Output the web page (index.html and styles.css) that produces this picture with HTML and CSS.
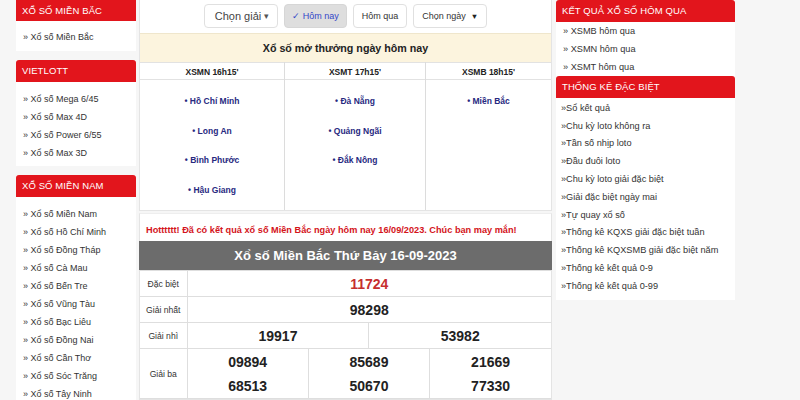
FILE: index.html
```html
<!DOCTYPE html>
<html lang="vi">
<head>
<meta charset="utf-8">
<title>Xổ số</title>
<link rel="stylesheet" href="styles.css">
</head>
<body>
<div class="page">
  <aside class="left">
    <section class="box box-first">
      <h3 class="box-title">XỔ SỐ MIỀN BẮC</h3>
      <ul class="links links-a">
        <li>» Xổ số Miền Bắc</li>
      </ul>
    </section>
    <section class="box">
      <h3 class="box-title">VIETLOTT</h3>
      <ul class="links links-b">
        <li>» Xổ số Mega 6/45</li>
        <li>» Xổ số Max 4D</li>
        <li>» Xổ số Power 6/55</li>
        <li>» Xổ số Max 3D</li>
      </ul>
    </section>
    <section class="box">
      <h3 class="box-title">XỔ SỐ MIỀN NAM</h3>
      <ul class="links links-c">
        <li>» Xổ số Miền Nam</li>
        <li>» Xổ số Hồ Chí Minh</li>
        <li>» Xổ số Đồng Tháp</li>
        <li>» Xổ số Cà Mau</li>
        <li>» Xổ số Bến Tre</li>
        <li>» Xổ số Vũng Tàu</li>
        <li>» Xổ số Bạc Liêu</li>
        <li>» Xổ số Đồng Nai</li>
        <li>» Xổ số Cần Thơ</li>
        <li>» Xổ số Sóc Trăng</li>
        <li>» Xổ số Tây Ninh</li>
      </ul>
    </section>
  </aside>

  <main class="center">
    <div class="panel schedule">
      <div class="toolbar">
        <button class="btn btn-big">Chọn giải <span class="caret">▾</span></button>
        <button class="btn btn-active">✓ Hôm nay</button>
        <button class="btn">Hôm qua</button>
        <button class="btn">Chọn ngày <span class="tri">▼</span></button>
      </div>
      <div class="notice">Xổ số mở thưởng ngày hôm nay</div>
      <div class="sched-grid">
        <div class="sched-col">
          <div class="sched-head">XSMN 16h15'</div>
          <ul class="sched-list">
            <li>• Hồ Chí Minh</li>
            <li>• Long An</li>
            <li>• Bình Phước</li>
            <li>• Hậu Giang</li>
          </ul>
        </div>
        <div class="sched-col">
          <div class="sched-head">XSMT 17h15'</div>
          <ul class="sched-list">
            <li>• Đà Nẵng</li>
            <li>• Quảng Ngãi</li>
            <li>• Đắk Nông</li>
          </ul>
        </div>
        <div class="sched-col">
          <div class="sched-head">XSMB 18h15'</div>
          <ul class="sched-list">
            <li>• Miền Bắc</li>
          </ul>
        </div>
      </div>
    </div>

    <div class="panel results">
      <p class="hot">Hotttttt! Đã có kết quả xổ số Miền Bắc ngày hôm nay 16/09/2023. Chúc bạn may mắn!</p>
      <div class="res-title">Xổ số Miền Bắc Thứ Bảy 16-09-2023</div>
      <table class="kq">
        <colgroup>
          <col class="c-label">
          <col><col><col><col><col><col>
        </colgroup>
        <tr>
          <td class="lbl">Đặc biệt</td>
          <td class="num special" colspan="6">11724</td>
        </tr>
        <tr>
          <td class="lbl">Giải nhất</td>
          <td class="num" colspan="6">98298</td>
        </tr>
        <tr>
          <td class="lbl">Giải nhì</td>
          <td class="num" colspan="3">19917</td>
          <td class="num" colspan="3">53982</td>
        </tr>
        <tr class="row-ba">
          <td class="lbl">Giải ba</td>
          <td class="num" colspan="2"><div>09894</div><div>68513</div></td>
          <td class="num" colspan="2"><div>85689</div><div>50670</div></td>
          <td class="num" colspan="2"><div>21669</div><div>77330</div></td>
        </tr>
      </table>
    </div>
  </main>

  <aside class="right">
    <section class="box">
      <h3 class="box-title">KẾT QUẢ XỔ SỐ HÔM QUA</h3>
      <ul class="rlinks">
        <li>» XSMB hôm qua</li>
        <li>» XSMN hôm qua</li>
        <li>» XSMT hôm qua</li>
      </ul>
    </section>
    <section class="box">
      <h3 class="box-title">THỐNG KÊ ĐẶC BIỆT</h3>
      <ul class="rlinks rlinks-b">
        <li>»Sổ kết quả</li>
        <li>»Chu kỳ loto không ra</li>
        <li>»Tần số nhịp loto</li>
        <li>»Đầu đuôi loto</li>
        <li>»Chu kỳ loto giải đặc biệt</li>
        <li>»Giải đặc biệt ngày mai</li>
        <li>»Tự quay xổ số</li>
        <li>»Thống kê KQXS giải đặc biệt tuần</li>
        <li>»Thống kê KQXSMB giải đặc biệt năm</li>
        <li>»Thống kê kết quả 0-9</li>
        <li>»Thống kê kết quả 0-99</li>
      </ul>
    </section>
  </aside>
</div>
</body>
</html>
```

FILE: styles.css
```css
* { box-sizing: border-box; }

html, body {
  margin: 0;
  padding: 0;
  background: #f6f6f6;
  font-family: "Liberation Sans", Arial, sans-serif;
  color: #333;
  height: 400px;
  overflow: hidden;
}

ul { list-style: none; margin: 0; padding: 0; }
h3 { margin: 0; }
p { margin: 0; }

.page {
  display: flex;
  align-items: flex-start;
  padding-left: 16px;
  gap: 3px;
}

/* ---------- side boxes ---------- */
.left { width: 120px; flex: none; display: flex; flex-direction: column; gap: 9px; }
.right { width: 179px; flex: none; margin-left: 1px; background: #fff; }

.box { background: #fff; }

.box-title {
  background: #e2151c;
  color: #fff;
  font-size: 9.5px;
  font-weight: normal;
  height: 22px;
  line-height: 22px;
  padding-left: 6px;
  border-radius: 3px 3px 0 0;
  letter-spacing: 0.1px;
}

.box-first .box-title { height: 21px; line-height: 21px; border-radius: 0; }

.links { padding: 8px 0 4px 7px; font-size: 9px; line-height: 18px; }
.links-a { padding-top: 7px; padding-bottom: 5px; }
.links-c { padding-bottom: 20px; }

.rlinks { padding: 1px 0 0 7px; font-size: 9.2px; line-height: 17.8px; }
.rlinks-b { padding: 1.5px 0 4px 5px; }

/* ---------- center ---------- */
.center { width: 413px; flex: none; display: flex; flex-direction: column; gap: 2px; }

.panel { background: #fff; border: 1px solid #e4e4e4; }

.schedule { border-top: none; }

.toolbar {
  display: flex;
  justify-content: center;
  gap: 6px;
  padding: 4px 0 5px;
}

.btn {
  height: 24px;
  padding: 0 8px;
  border: 1px solid #e0e0e0;
  border-radius: 4px;
  background: #fff;
  font-family: "Liberation Sans", Arial, sans-serif;
  font-size: 9px;
  color: #333;
  display: flex;
  align-items: center;
  gap: 3px;
}

.btn-big { font-size: 11px; color: #444; padding: 0 8px 0 10px; }
.caret { font-size: 9px; color: #555; }
.tri { font-size: 7.5px; margin-left: 2px; color: #222; }

.btn-active {
  background: #dedede;
  border-color: #d6d6d6;
  color: #3346c8;
  padding: 0 7px;
}

.notice {
  background: #fcf4de;
  text-align: center;
  font-weight: bold;
  font-size: 10.7px;
  color: #222;
  height: 29px;
  line-height: 29px;
  border-top: 1px solid #efe6cc;
}

.sched-grid {
  display: grid;
  grid-template-columns: 144px 141px 1fr;
}

.sched-col + .sched-col { border-left: 1px solid #dcdcdc; }

.sched-head {
  height: 18px;
  line-height: 18px;
  text-align: center;
  font-weight: bold;
  font-size: 8.5px;
  color: #222;
  border-top: 1px solid #e2e2e2;
  border-bottom: 1px solid #e2e2e2;
}

.sched-list {
  padding: 7px 0 3px;
  min-height: 130px;
  text-align: center;
  font-weight: bold;
  font-size: 8.5px;
  line-height: 29.7px;
  color: #27297f;
}

.results { border-top-color: #eee; }

.hot {
  color: #d4141b;
  font-weight: bold;
  font-size: 9.2px;
  line-height: 16px;
  padding: 8px 6px 3px;
}

.res-title {
  background: #6c6c6c;
  color: #fff;
  font-weight: bold;
  font-size: 13px;
  height: 29px;
  line-height: 29px;
  text-align: center;
  margin: 0 -1px;
}

.kq {
  width: 100%;
  border-collapse: collapse;
  table-layout: fixed;
}

.c-label { width: 47px; }

.kq td {
  border: 1px solid #dedede;
  text-align: center;
  height: 26px;
  padding: 0;
}

.kq tr td:first-child { border-left: none; }
.kq tr td:last-child { border-right: none; }

.lbl { font-size: 8.6px; color: #333; }

.num { font-weight: bold; font-size: 14px; color: #222; }

.special { color: #c62f2f; }

.row-ba td { height: 50px; }
.row-ba .num div { line-height: 24px; }
```
